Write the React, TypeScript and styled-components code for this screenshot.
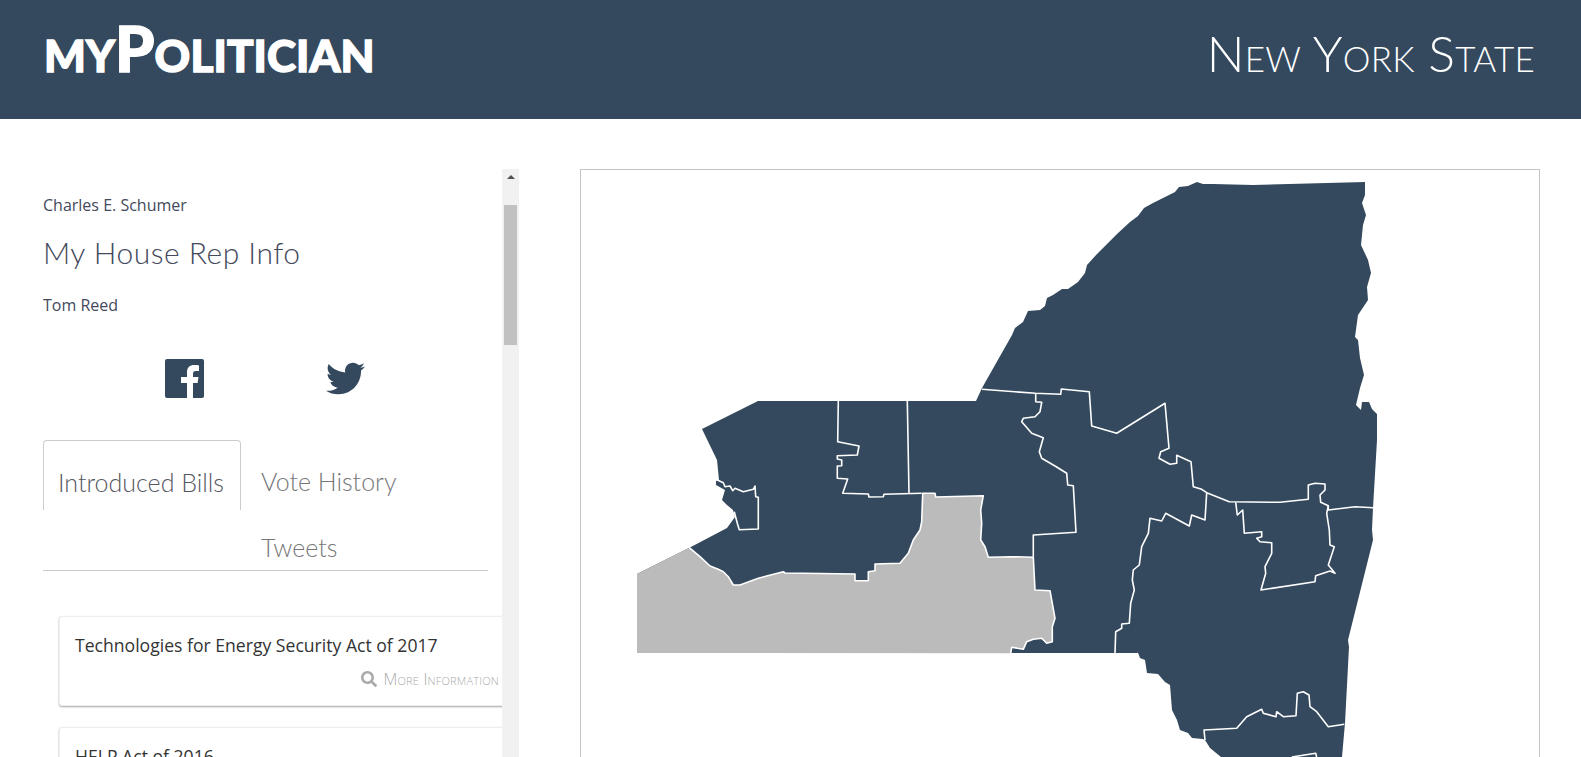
import React from 'react';
import styled, { createGlobalStyle } from 'styled-components';
import { FaTwitter, FaSearch } from 'react-icons/fa';

const GlobalStyle = createGlobalStyle`
  html, body { margin: 0; padding: 0; background: #fff; height: 757px; overflow: hidden; }
  body { font-family: "Open Sans", "Liberation Sans", sans-serif; color: #44495c; }
`;

const NAVY = '#34495e';
const GREY = '#bbbbbb';

const toPath = (ox: number, oy: number, s: string) =>
  'M' + s.trim().split(/\s+/).map((p) => {
    const [x, y] = p.split(',').map(Number);
    return `${(ox + x / 3).toFixed(1)} ${(oy + y / 3).toFixed(1)}`;
  }).join('L');

const STATE =
  '637,574 689,548 727,528 735,517 733,510 727,505 722,500 725,490 716,485 716,481 719,480 717,460 702,429 758,401 976,401 982,388 1012,335 1015,328 1023,322 1028,311 1040,310 1045,306 1047,298 1053,295 1062,289 1068,289 1078,282 1085,273 1087,265 1097,254 1108,243 1117,234 1130,222 1138,216 1144,208 1153,203 1163,198 1175,192 1179,187 1188,186 1197,182 1203,184 1213,184 1253,185 1365,182 1365,195 1362,203 1366,215 1363,225 1361,245 1368,260 1371,273 1367,287 1368,300 1358,315 1355,337 1358,340 1360,358 1364,375 1360,388 1356,405 1361,410 1362,402 1369,402 1372,409 1377,414 1377,440 1373,508 1372,530 1373,540 1348,640 1349,647 1345,723 1342,757 1340,800 1221,800 1221,757 1210,748 1205,740 1203,739 1192,738 1188,733 1180,730 1177,720 1172,710 1170,685 1165,682 1158,674 1147,673 1145,660 1140,658 1137,650 1138,653 637,653';

const GREY_EDGE =
  '208,533 240,560 270,588 295,598 310,605 325,620 340,645 360,645 415,625 440,618 490,605 495,609 705,612 705,632 745,632 745,605 765,602 765,582 840,580 865,550 880,510 900,480 905,455 908,370 945,370 947,381 1090,377 1082,420 1085,460 1082,510 1095,530 1105,562 1175,560 1240,562 1245,660 1290,662 1297,700 1305,745 1297,770 1297,815 1280,820 1265,805 1240,808 1220,815 1210,838 1175,832 1172,850';

const Z3_LINES = [
  '655,93 653,215 717,228 712,255 652,257 652,267 665,270 665,287 652,288 652,325 683,327 668,370 745,372 747,381 790,380 792,373 905,370',
  '862,93 867,370',
  '292,330 310,338 315,350 330,348 338,362 345,355 370,365 400,358 405,348 407,380 415,382 415,477 358,479 352,460 343,425',
];

const Z4_LINES = [
  '-54,58 107,70 182,73 184,57 268,65 275,168 350,190 495,100 507,235 482,245 477,265 510,283 530,280 530,256 573,275 580,350 605,358 620,368 688,395 840,397 925,388 925,345 945,340 975,342 975,360 960,375 962,397 985,407 985,420 1065,410 1120,413',
  '107,70 107,95 125,97 120,125 105,140 70,145 65,155 95,190 130,203 118,245 125,265 165,288 200,310 203,345 220,347 228,487 100,495 100,560',
  '620,368 615,450 575,435 568,468 497,430 485,453 450,445 445,490 425,530 418,585 400,600 397,630 403,660 392,700 388,760 365,762 365,775 347,785 345,850',
  '707,397 712,435 728,420 733,490 785,485 785,500 770,505 780,515 815,518 815,550 795,590 797,610 783,660 945,635 947,617 990,603 1005,610 985,585 1003,530 990,525 988,480 980,430 985,407',
  '615,1110 612,1080 710,1075 740,1040 785,1018 790,1030 828,1040 830,1025 850,1040 888,1037 892,970 910,965 927,975 930,1010 950,1025 985,1070 1033,1063',
  '875,1161 947,1150 950,1161',
];

const statePath =
  'M' + STATE.split(' ').map((p) => p.replace(',', ' ')).join('L') + 'Z';
const greyPath = toPath(620, 370, GREY_EDGE) + 'L637 653L637 574Z';

const Page = styled.div`
  width: 1581px;
  height: 757px;
  overflow: hidden;
`;

const Header = styled.header`
  height: 119px;
  background: ${NAVY};
  display: flex;
  justify-content: space-between;
  box-sizing: border-box;
  padding: 0 46px 0 44px;
`;

const Logo = styled.h1`
  margin: 9px 0 0;
  font-family: Lato, "Liberation Sans", sans-serif;
  font-weight: 900;
  font-size: 63px;
  line-height: 78px;
  color: #fff;
  font-variant: small-caps;
  letter-spacing: 0.1px;
  -webkit-text-stroke: 1.4px #fff;
`;

const StateName = styled.div`
  margin-top: 18px;
  font-family: Lato, "Liberation Sans", sans-serif;
  font-weight: 300;
  font-size: 50px;
  line-height: 70px;
  color: #fff;
  font-variant: small-caps;
  letter-spacing: 0.2px;
`;

const Main = styled.main`
  display: flex;
  padding: 50px 0 0 43px;
`;

const Sidebar = styled.aside`
  display: flex;
  width: 476px;
  height: 760px;
  flex: none;
`;

const SideContent = styled.div`
  width: 459px;
  flex: none;
  overflow: hidden;
`;

const ScrollTrack = styled.div`
  width: 17px;
  flex: none;
  background: #f1f1f1;
  display: flex;
  flex-direction: column;
  align-items: center;
`;

const ScrollArrow = styled.div`
  margin-top: 6px;
  width: 0;
  height: 0;
  border-left: 4px solid transparent;
  border-right: 4px solid transparent;
  border-bottom: 4px solid #505050;
`;

const ScrollThumb = styled.div`
  margin-top: 26px;
  width: 13px;
  height: 140px;
  background: #c1c1c1;
`;

const Name = styled.p`
  margin: 0;
  font-size: 16px;
  line-height: 20px;
  color: #44495c;
`;

const Senator = styled(Name)`
  padding-top: 26px;
`;

const SectionTitle = styled.h2`
  margin: 17px 0 23px;
  font-family: Lato, "Liberation Sans", sans-serif;
  font-weight: 300;
  font-size: 30px;
  letter-spacing: 0.5px;
  line-height: 40px;
  color: #44495c;
`;

const Socials = styled.div`
  display: flex;
  width: 445px;
  box-sizing: border-box;
  padding-left: 122px;
  gap: 122px;
  margin-top: 41px;
  color: ${NAVY};
  height: 44px;
  align-items: center;
  svg { display: block; }
`;

const FacebookIcon = () => (
  <svg width="39" height="39" viewBox="0 0 39 39" fill={NAVY}>
    <path d="M2 0H37A2 2 0 0 1 39 2V37A2 2 0 0 1 37 39H28V24H32.6L33.5 18H28V15C28 13 28.500 12 31 12H34V6.400C33 6.200 31 6 29 6C25 6 22 8.500 22 13V18H16V24H22V39H2A2 2 0 0 1 0 37V2A2 2 0 0 1 2 0Z" />
  </svg>
);

const TwitterIcon = styled(FaTwitter)`
  width: 39px;
  height: 39px;
`;

const Tabs = styled.nav`
  width: 445px;
  box-sizing: border-box;
  margin-top: 40px;
  height: 131px;
  border-bottom: 1px solid #ccc;
  display: grid;
  grid-template-columns: 198px 1fr;
  grid-template-rows: 70px 1fr;
`;

const Tab = styled.div<{ $active?: boolean }>`
  box-sizing: border-box;
  font-family: Lato, "Liberation Sans", sans-serif;
  font-weight: 300;
  font-size: 25px;
  color: ${(p) => (p.$active ? '#55585f' : '#777')};
  padding: 23px 0 0 ${(p) => (p.$active ? '14px' : '20px')};
  line-height: 36px;
  ${(p) =>
    p.$active &&
    `border: 1px solid #ccc; border-bottom: 0; border-radius: 4px 4px 0 0;`}
`;

const TweetsTab = styled(Tab)`
  grid-column: 2;
  padding-top: 19px;
`;

const Card = styled.article`
  box-sizing: border-box;
  margin: 0 0 21px 16px;
  width: 480px;
  height: 90px;
  background: #fff;
  border: 1px solid #eee;
  border-radius: 3px;
  box-shadow: 0 1px 2px rgba(0, 0, 0, 0.35);
  padding: 15px 15px;
`;

const FirstCard = styled(Card)`
  margin-top: 45px;
`;

const CardTitle = styled.h3`
  margin: 0;
  font-weight: 400;
  font-size: 17.6px;
  line-height: 26px;
  color: #333;
`;

const MoreInfo = styled.div`
  display: flex;
  align-items: center;
  gap: 6px;
  width: 424px;
  justify-content: flex-end;
  margin-top: 11px;
  font-size: 16px;
  letter-spacing: 0.2px;
  line-height: 20px;
  font-variant: small-caps;
  font-weight: 300;
  color: #aaa;
  white-space: nowrap;
`;

const MapFrame = styled.section`
  margin-left: 61px;
  box-sizing: border-box;
  width: 960px;
  height: 760px;
  border: 1px solid #c4c4c4;
  overflow: hidden;
  flex: none;
`;

const MapSvg = styled.svg`
  display: block;
`;

const App: React.FC = () => (
  <Page>
    <GlobalStyle />
    <Header>
      <Logo>myPolitician</Logo>
      <StateName>New York State</StateName>
    </Header>
    <Main>
      <Sidebar>
        <SideContent>
          <Senator>Charles E. Schumer</Senator>
          <SectionTitle>My House Rep Info</SectionTitle>
          <Name>Tom Reed</Name>
          <Socials>
            <FacebookIcon />
            <TwitterIcon />
          </Socials>
          <Tabs>
            <Tab $active>Introduced Bills</Tab>
            <Tab>Vote History</Tab>
            <TweetsTab>Tweets</TweetsTab>
          </Tabs>
          <FirstCard>
            <CardTitle>Technologies for Energy Security Act of 2017</CardTitle>
            <MoreInfo>
              <FaSearch />
              More Information
            </MoreInfo>
          </FirstCard>
          <Card>
            <CardTitle>HELP Act of 2016</CardTitle>
          </Card>
        </SideContent>
        <ScrollTrack>
          <ScrollArrow />
          <ScrollThumb />
        </ScrollTrack>
      </Sidebar>
      <MapFrame>
        <MapSvg width="958" height="758" viewBox="581 170 958 758">
          <path d={statePath} fill={NAVY} />
          <path d={greyPath} fill={GREY} />
          <g fill="none" stroke="#fff" strokeWidth="1.6" strokeLinejoin="round">
            <path d={toPath(620, 370, GREY_EDGE)} />
            {Z3_LINES.map((l) => (
              <path key={l} d={toPath(620, 370, l)} />
            ))}
            {Z4_LINES.map((l) => (
              <path key={l} d={toPath(1000, 370, l)} />
            ))}
          </g>
        </MapSvg>
      </MapFrame>
    </Main>
  </Page>
);

export default App;
